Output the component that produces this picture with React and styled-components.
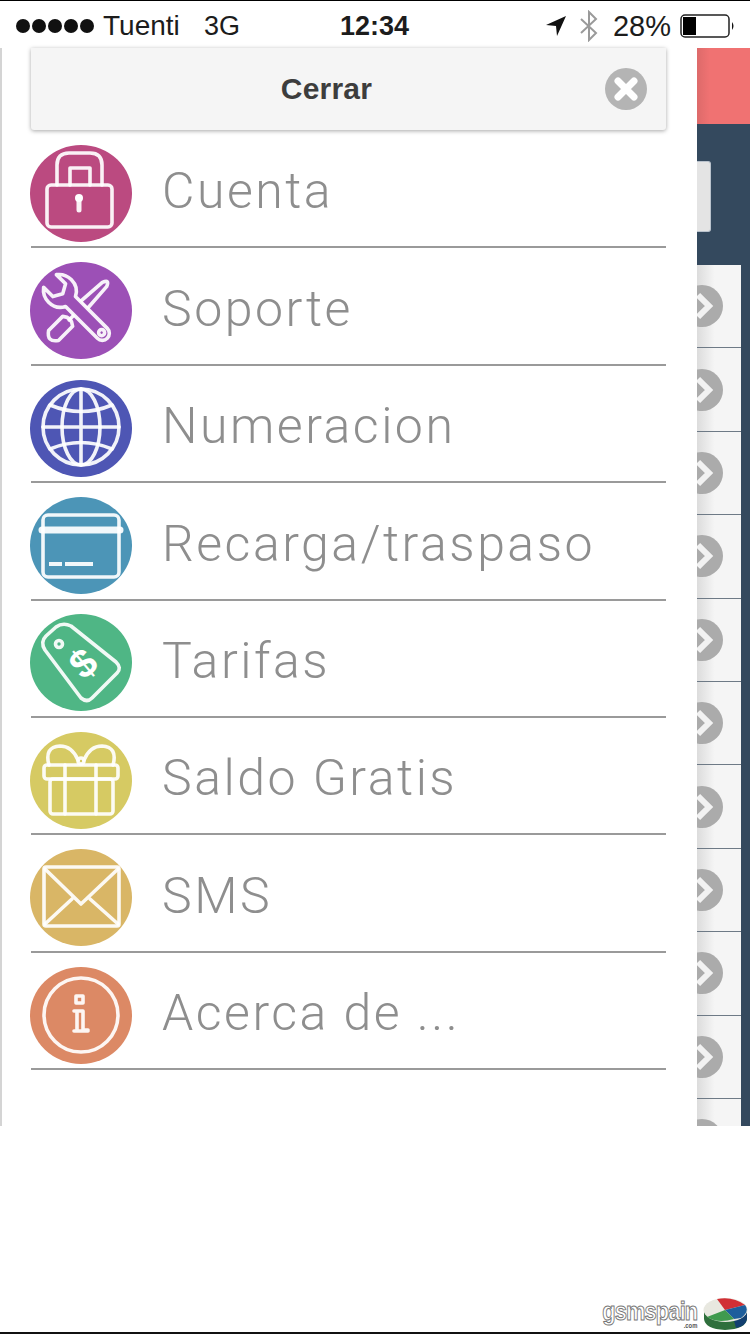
import React from 'react';
import styled, { createGlobalStyle } from 'styled-components';

const GlobalStyle = createGlobalStyle`
    html, body {
        margin: 0;
        padding: 0;
        background: #fff;
    }
`;

const Page = styled.div`
    width: 750px;
    height: 1334px;
    display: flex;
    flex-direction: column;
    overflow: hidden;
    background: #fff;
    border-top: 1px solid #000;
    border-bottom: 2px solid #111;
    box-sizing: border-box;
    font-family: "Liberation Sans", Arial, sans-serif;
`;

const StatusBar = styled.div`
    height: 47px;
    flex: none;
    box-sizing: border-box;
    display: flex;
    align-items: center;
    padding: 3px 14px 0 16px;
    font-size: 28px;
    color: #1c1c1c;
`;

const Signal = styled.div`
    width: 87px;
    display: flex;
    gap: 2px;
`;

const Dot = styled.span`
    width: 14px;
    height: 14px;
    border-radius: 50%;
    background: #111;
`;

const Carrier = styled.span`
    width: 101px;
`;

const Network = styled.span`
    width: 136px;
    font-size: 27px;
`;

const Clock = styled.span`
    font-weight: 700;
    font-size: 27px;
`;

const StatusRight = styled.div`
    margin-left: auto;
    display: flex;
    align-items: center;
`;

const Percent = styled.span`
    margin: 0 9px 0 14px;
    font-size: 29px;
`;

const Main = styled.div`
    height: 1078px;
    flex: none;
    display: flex;
    position: relative;
`;

const Drawer = styled.nav`
    width: 697px;
    flex: none;
    box-sizing: border-box;
    border-left: 2px solid #d4d4d4;
    background: #fff;
    padding: 0 31px 0 29px;
    position: relative;
    z-index: 1;
`;

const CloseBar = styled.div`
    height: 82px;
    box-sizing: border-box;
    position: relative;
    display: flex;
    align-items: center;
    justify-content: center;
    background: #f5f5f5;
    border-radius: 0 0 3px 3px;
    box-shadow: 0 1px 4px rgba(0, 0, 0, 0.35);
    font-size: 30px;
    letter-spacing: 0.2px;
    font-weight: 700;
    color: #3d3d3d;
    padding-right: 44px;
`;

const CloseIcon = styled.svg`
    position: absolute;
    right: 19px;
    top: 20px;
`;

const MenuList = styled.div`
    display: flex;
    flex-direction: column;
    margin-top: 1px;
`;

const MenuRow = styled.div`
    height: 117.4px;
    box-sizing: border-box;
    display: flex;
    align-items: flex-end;
    gap: 30px;
    padding-bottom: 4.6px;
    border-bottom: 2px solid #9a9a9a;
`;

const MenuLabel = styled.span`
    font-family: Roboto, "Liberation Sans", sans-serif;
    font-weight: 300;
    font-size: 50px;
    line-height: 97px;
    letter-spacing: 2.5px;
    color: #8e8e8e;
    margin-bottom: 1.4px;
`;

const IconSvg = styled.svg`
    flex: none;
    margin-left: -1px;
`;

const Behind = styled.div`
    flex: 1;
    min-width: 0;
    overflow: hidden;
    display: flex;
    flex-direction: column;
    background: #34495e;
`;

const RedHeader = styled.div`
    height: 76px;
    flex: none;
    background: linear-gradient(to right, #dd6a6a, #f07272 24%);
`;

const SearchStub = styled.div`
    width: 14px;
    height: 71px;
    flex: none;
    margin: 37px 0 33px;
    background: #e4e4e4;
    border: 1px solid #b9c2cc;
    border-left: 0;
    border-radius: 0 3px 3px 0;
    box-sizing: border-box;
`;

const BackRow = styled.div`
    width: 44px;
    height: 83.4px;
    flex: none;
    box-sizing: border-box;
    display: flex;
    align-items: center;
    background: linear-gradient(to right, #dcdcdc, #f5f5f5 40%);
    border-bottom: 1px solid #6e7a86;
    overflow: hidden;
`;

const Chevron = styled.svg`
    flex: none;
    margin-left: -16px;
`;

const Footer = styled.div`
    flex: 1;
    display: flex;
    align-items: flex-end;
    justify-content: flex-end;
    gap: 6px;
    padding: 0 2px 1px 0;
`;

const WatermarkText = styled.span`
    position: relative;
    font-size: 26px;
    line-height: 22px;
    font-weight: 700;
    letter-spacing: -1px;
    color: #fff;
    -webkit-text-stroke: 1px #777;
    margin-bottom: 9px;
    transform: scaleX(0.84);
    transform-origin: right center;
`;

const WatermarkCom = styled.small`
    position: absolute;
    right: 0;
    top: 22px;
    font-size: 7px;
    line-height: 7px;
    letter-spacing: 0;
    color: #555;
    -webkit-text-stroke: 0;
`;

const LockIcon = () => (
    <g>
        <rect x="17" y="40" width="65" height="42" rx="4" />
        <path d="M27 40 V20 Q27 8 39 8 H60 Q72 8 72 20 V40" />
        <path d="M40 40 V23 H60 V40" />
        <circle cx="49" cy="53" r="4" fill="#fff" stroke="none" />
        <path d="M49 55 V65" strokeWidth="5" />
    </g>
);

const ToolsIcon = ({ color }) => (
    <g>
        <g transform="rotate(45 49 48)">
            <path d="M44 42 L46 12 Q49 4 52 12 L54 42 Z" />
            <path d="M44 42 H54 M49 42 V62" />
            <path d="M42 64 Q49 58 56 64 V84 Q49 94 42 84 Z" />
        </g>
        <g transform="rotate(-45 49 48)">
            <path
                d="M42 36 V81 a7 7 0 0 0 14 0 V36 C62 33 65 27 65 21 C65 15 62 10 58 7 V20 L49 25 L40 20 V7 C36 10 33 15 33 21 C33 27 36 33 42 36 Z"
                fill={color}
            />
            <circle cx="49" cy="80" r="3" />
        </g>
    </g>
);

const GlobeIcon = () => (
    <g>
        <circle cx="51" cy="47" r="38" />
        <ellipse cx="51" cy="47" rx="19" ry="38" />
        <path d="M51 9 V85 M13 47 H89" />
        <path d="M20 25 Q51 38 82 25 M20 69 Q51 56 82 69" />
    </g>
);

const CardIcon = () => (
    <g>
        <rect x="13" y="18" width="76" height="62" rx="5" />
        <path d="M12 33 H90" strokeWidth="7" />
        <path d="M19 67 H32 M35 67 H63" strokeWidth="4" strokeLinecap="butt" />
    </g>
);

const TagIcon = () => (
    <g>
        <path d="M15 36 Q10 28 16 22 L26 13 Q33 8 41 12 L86 48 Q92 54 87 59 L62 84 Q57 89 51 84 Z" />
        <circle cx="29" cy="30" r="3.5" />
        <text
            x="53"
            y="63"
            transform="rotate(-40 53 49)"
            textAnchor="middle"
            fontFamily="Liberation Sans, sans-serif"
            fontWeight="700"
            fontSize="40"
            fill="#fff"
            stroke="none"
        >
            $
        </text>
    </g>
);

const GiftIcon = () => (
    <g>
        <rect x="14" y="33" width="74" height="14" rx="3" />
        <rect x="20" y="47" width="63" height="35" rx="3" />
        <path d="M35 33 V82 M66 33 V82" />
        <path d="M19 33 Q14 15 30 14 Q42 14 48 28" />
        <path d="M83 33 Q88 15 72 14 Q60 14 54 28" />
        <circle cx="51" cy="29" r="3" />
    </g>
);

const MailIcon = () => (
    <g>
        <rect x="14" y="18" width="75" height="59" rx="2" />
        <path d="M15 20 L51 55 L88 20 M15 75 L42 50 M88 75 L60 50" />
    </g>
);

const InfoIcon = () => (
    <g>
        <circle cx="51" cy="48" r="37" />
        <rect x="46" y="29" width="7" height="7" />
        <path d="M44 44 H53 V63 H58 M44 64 H58 M47 46 V63" />
    </g>
);

const menuItems = [
    { label: 'Cuenta', color: '#bb4a80', Icon: LockIcon },
    { label: 'Soporte', color: '#9c50b6', Icon: ToolsIcon },
    { label: 'Numeracion', color: '#4e56b4', Icon: GlobeIcon },
    { label: 'Recarga/traspaso', color: '#4c95b7', Icon: CardIcon },
    { label: 'Tarifas', color: '#4fb685', Icon: TagIcon },
    { label: 'Saldo Gratis', color: '#d6ca63', Icon: GiftIcon },
    { label: 'SMS', color: '#d9b666', Icon: MailIcon },
    { label: 'Acerca de ...', color: '#dc8965', Icon: InfoIcon },
];

function MenuIcon({ color, Icon }) {
    return (
        <IconSvg width="102" height="97" viewBox="0 0 102 97">
            <ellipse cx="51" cy="48.5" rx="51" ry="48.5" fill={color} />
            <g fill="none" stroke="#fff" strokeWidth="3.6" strokeLinejoin="round" strokeLinecap="round" strokeOpacity="0.92">
                <Icon color={color} />
            </g>
        </IconSvg>
    );
}

function App() {
    const rows = Array.from({ length: 11 }, (_, i) => i);

    return (
        <Page>
            <GlobalStyle />
            <StatusBar>
                <Signal>
                    {[0, 1, 2, 3, 4].map(i => <Dot key={i} />)}
                </Signal>
                <Carrier>Tuenti</Carrier>
                <Network>3G</Network>
                <Clock>12:34</Clock>
                <StatusRight>
                    <svg width="22" height="22" viewBox="0 0 22 22">
                        <path d="M21 1 L1 10 L11 11 L12 21 Z" fill="#111" />
                    </svg>
                    <svg width="20" height="32" viewBox="0 0 20 32" style={{ marginLeft: 12 }}>
                        <path d="M2 9 L17 23 L10 30 V2 L17 9 L2 23" fill="none" stroke="#9a9a9a" strokeWidth="2" />
                    </svg>
                    <Percent>28%</Percent>
                    <svg width="56" height="24" viewBox="0 0 56 24">
                        <rect x="1" y="1" width="48" height="22" rx="4" fill="#fff" stroke="#222" strokeWidth="1.5" />
                        <rect x="3" y="3" width="13" height="18" fill="#000" />
                        <path d="M52 8 Q55 12 52 16 Z" fill="#111" />
                    </svg>
                </StatusRight>
            </StatusBar>
            <Main>
                <Drawer>
                    <CloseBar>
                        Cerrar
                        <CloseIcon width="42" height="42" viewBox="0 0 42 42">
                            <circle cx="21" cy="21" r="21" fill="#b4b4b4" />
                            <path d="M13 13 L29 29 M29 13 L13 29" stroke="#fff" strokeWidth="7" strokeLinecap="round" />
                        </CloseIcon>
                    </CloseBar>
                    <MenuList>
                        {menuItems.map(item =>
                            <MenuRow key={item.label}>
                                <MenuIcon color={item.color} Icon={item.Icon} />
                                <MenuLabel>{item.label}</MenuLabel>
                            </MenuRow>
                        )}
                    </MenuList>
                </Drawer>
                <Behind>
                    <RedHeader />
                    <SearchStub />
                    {rows.map(i =>
                        <BackRow key={i}>
                            <Chevron width="42" height="42" viewBox="0 0 42 42">
                                <circle cx="21" cy="21" r="21" fill="#ababab" />
                                <path d="M17 10 L28 21 L17 32" fill="none" stroke="#f2f2f2" strokeWidth="6" />
                            </Chevron>
                        </BackRow>
                    )}
                </Behind>
            </Main>
            <Footer>
                <WatermarkText>
                    gsmspain
                    <WatermarkCom>.com</WatermarkCom>
                </WatermarkText>
                <svg width="45" height="34" viewBox="0 0 45 34">
                    <path d="M1 14 V22 Q2 32 22 33 Q43 32 44 22 V14 Z" fill="#2f6f3c" />
                    <path d="M30 20 L44 16 V22 Q43 29 33 31 Z" fill="#123f70" />
                    <ellipse cx="22.5" cy="13" rx="22" ry="12" fill="#e8e8e0" />
                    <path d="M22 13 L14 2 Q30 -1 42 8 Z" fill="#d12f35" />
                    <path d="M22 13 L42 8 Q47 14 38 21 L31 22 Z" fill="#1d5e9c" />
                    <path d="M22 13 L31 22 Q15 27 4 20 Z" fill="#3f9a4e" />
                </svg>
            </Footer>
        </Page>
    );
}

export default App
